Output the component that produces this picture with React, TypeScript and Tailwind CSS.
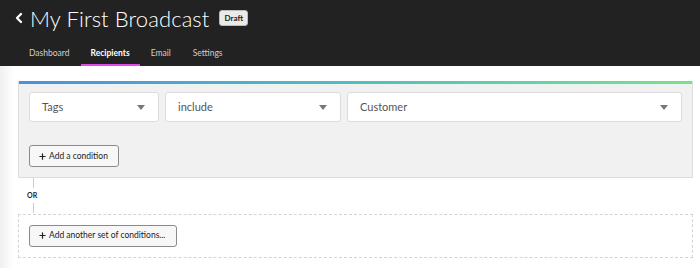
import { ChevronLeft, Plus } from "lucide-react";

const font = { fontFamily: "Lato, 'Noto Sans', sans-serif" };

function Select({ label, className }: { label: string; className: string }) {
  return (
    <div
      className={`flex h-[30px] items-center justify-between rounded-[3px] border border-[#dcdcdc] bg-white pl-3 pr-3 ${className}`}
    >
      <span className="text-[11px] text-[#555]">{label}</span>
      <svg width="8" height="5" viewBox="0 0 8 5" className="mr-[1px]">
        <path d="M0 0h8L4 5z" fill="#777" />
      </svg>
    </div>
  );
}

function AddButton({ label, className }: { label: string; className: string }) {
  return (
    <button
      className={`flex h-[22px] items-center gap-[2px] whitespace-nowrap rounded-[3px] border border-[#8a8a8a] bg-[#f7f7f7] pl-[8px] text-[8.5px] text-[#222] ${className}`}
    >
      <Plus size={9} strokeWidth={3.2} className="shrink-0" />
      <span>{label}</span>
    </button>
  );
}

export default function App() {
  return (
    <div className="h-[268px] w-[700px] overflow-hidden bg-white" style={font}>
      {/* Header */}
      <header className="h-[66px] bg-[#222222]">
        <div className="flex h-[36px] items-center pl-[11px]">
          <ChevronLeft size={16} strokeWidth={3.5} className="text-white" />
          <h1 className="ml-[3px] text-[22px] font-light tracking-[0.1px] text-white">
            My First Broadcast
          </h1>
          <span className="ml-[10px] rounded-[3px] border border-[#bbb] bg-[#eaeaea] px-[4px] py-[1px] text-[8px] font-bold text-[#222]">
            Draft
          </span>
        </div>
        <nav className="mt-[4px] flex h-[26px] items-stretch pl-[18px] text-[8.5px] text-[#cfcfcf]">
          <span className="flex items-center px-[11px]">Dashboard</span>
          <span className="flex items-center border-b-[2px] border-[#e14be8] px-[10px] pt-[2px] font-bold text-white">
            Recipients
          </span>
          <span className="flex items-center px-[11px]">Email</span>
          <span className="flex items-center px-[11px]">Settings</span>
        </nav>
      </header>

      {/* Body */}
      <div className="flex h-[202px]">
        <div className="w-[14px] bg-gradient-to-r from-[#f0f0f0] to-white" />
        <div className="flex-1 pl-[4px] pr-[7px] pt-[15px]">
          <div className="border border-t-0 border-[#dddddd] bg-[#f1f1f1]">
            <div className="h-[3px] bg-gradient-to-r from-[#4a90e2] via-[#4fbfc0] to-[#74e48a]" />
            <div className="flex gap-[6px] pl-[10px] pr-[10px] pt-[8px]">
              <Select label="Tags" className="w-[130px]" />
              <Select label="include" className="w-[176px]" />
              <Select label="Customer" className="flex-1" />
            </div>
            <div className="pb-[10px] pl-[10px] pt-[23px]">
              <AddButton label="Add a condition" className="w-[90px]" />
            </div>
          </div>

          <div className="flex flex-col pl-[9px]">
            <div className="ml-[6px] h-[10px] w-px bg-[#cccccc]" />
            <span className="my-[2px] text-[7px] font-bold text-[#222]">OR</span>
            <div className="ml-[6px] h-[10px] w-px bg-[#cccccc]" />
          </div>

          <div className="mt-[1px] h-[44px] border border-dashed border-[#d4d4d4] pl-[10px] pt-[10px]">
            <AddButton label="Add another set of conditions..." className="w-[148px]" />
          </div>
        </div>
      </div>
    </div>
  );
}
